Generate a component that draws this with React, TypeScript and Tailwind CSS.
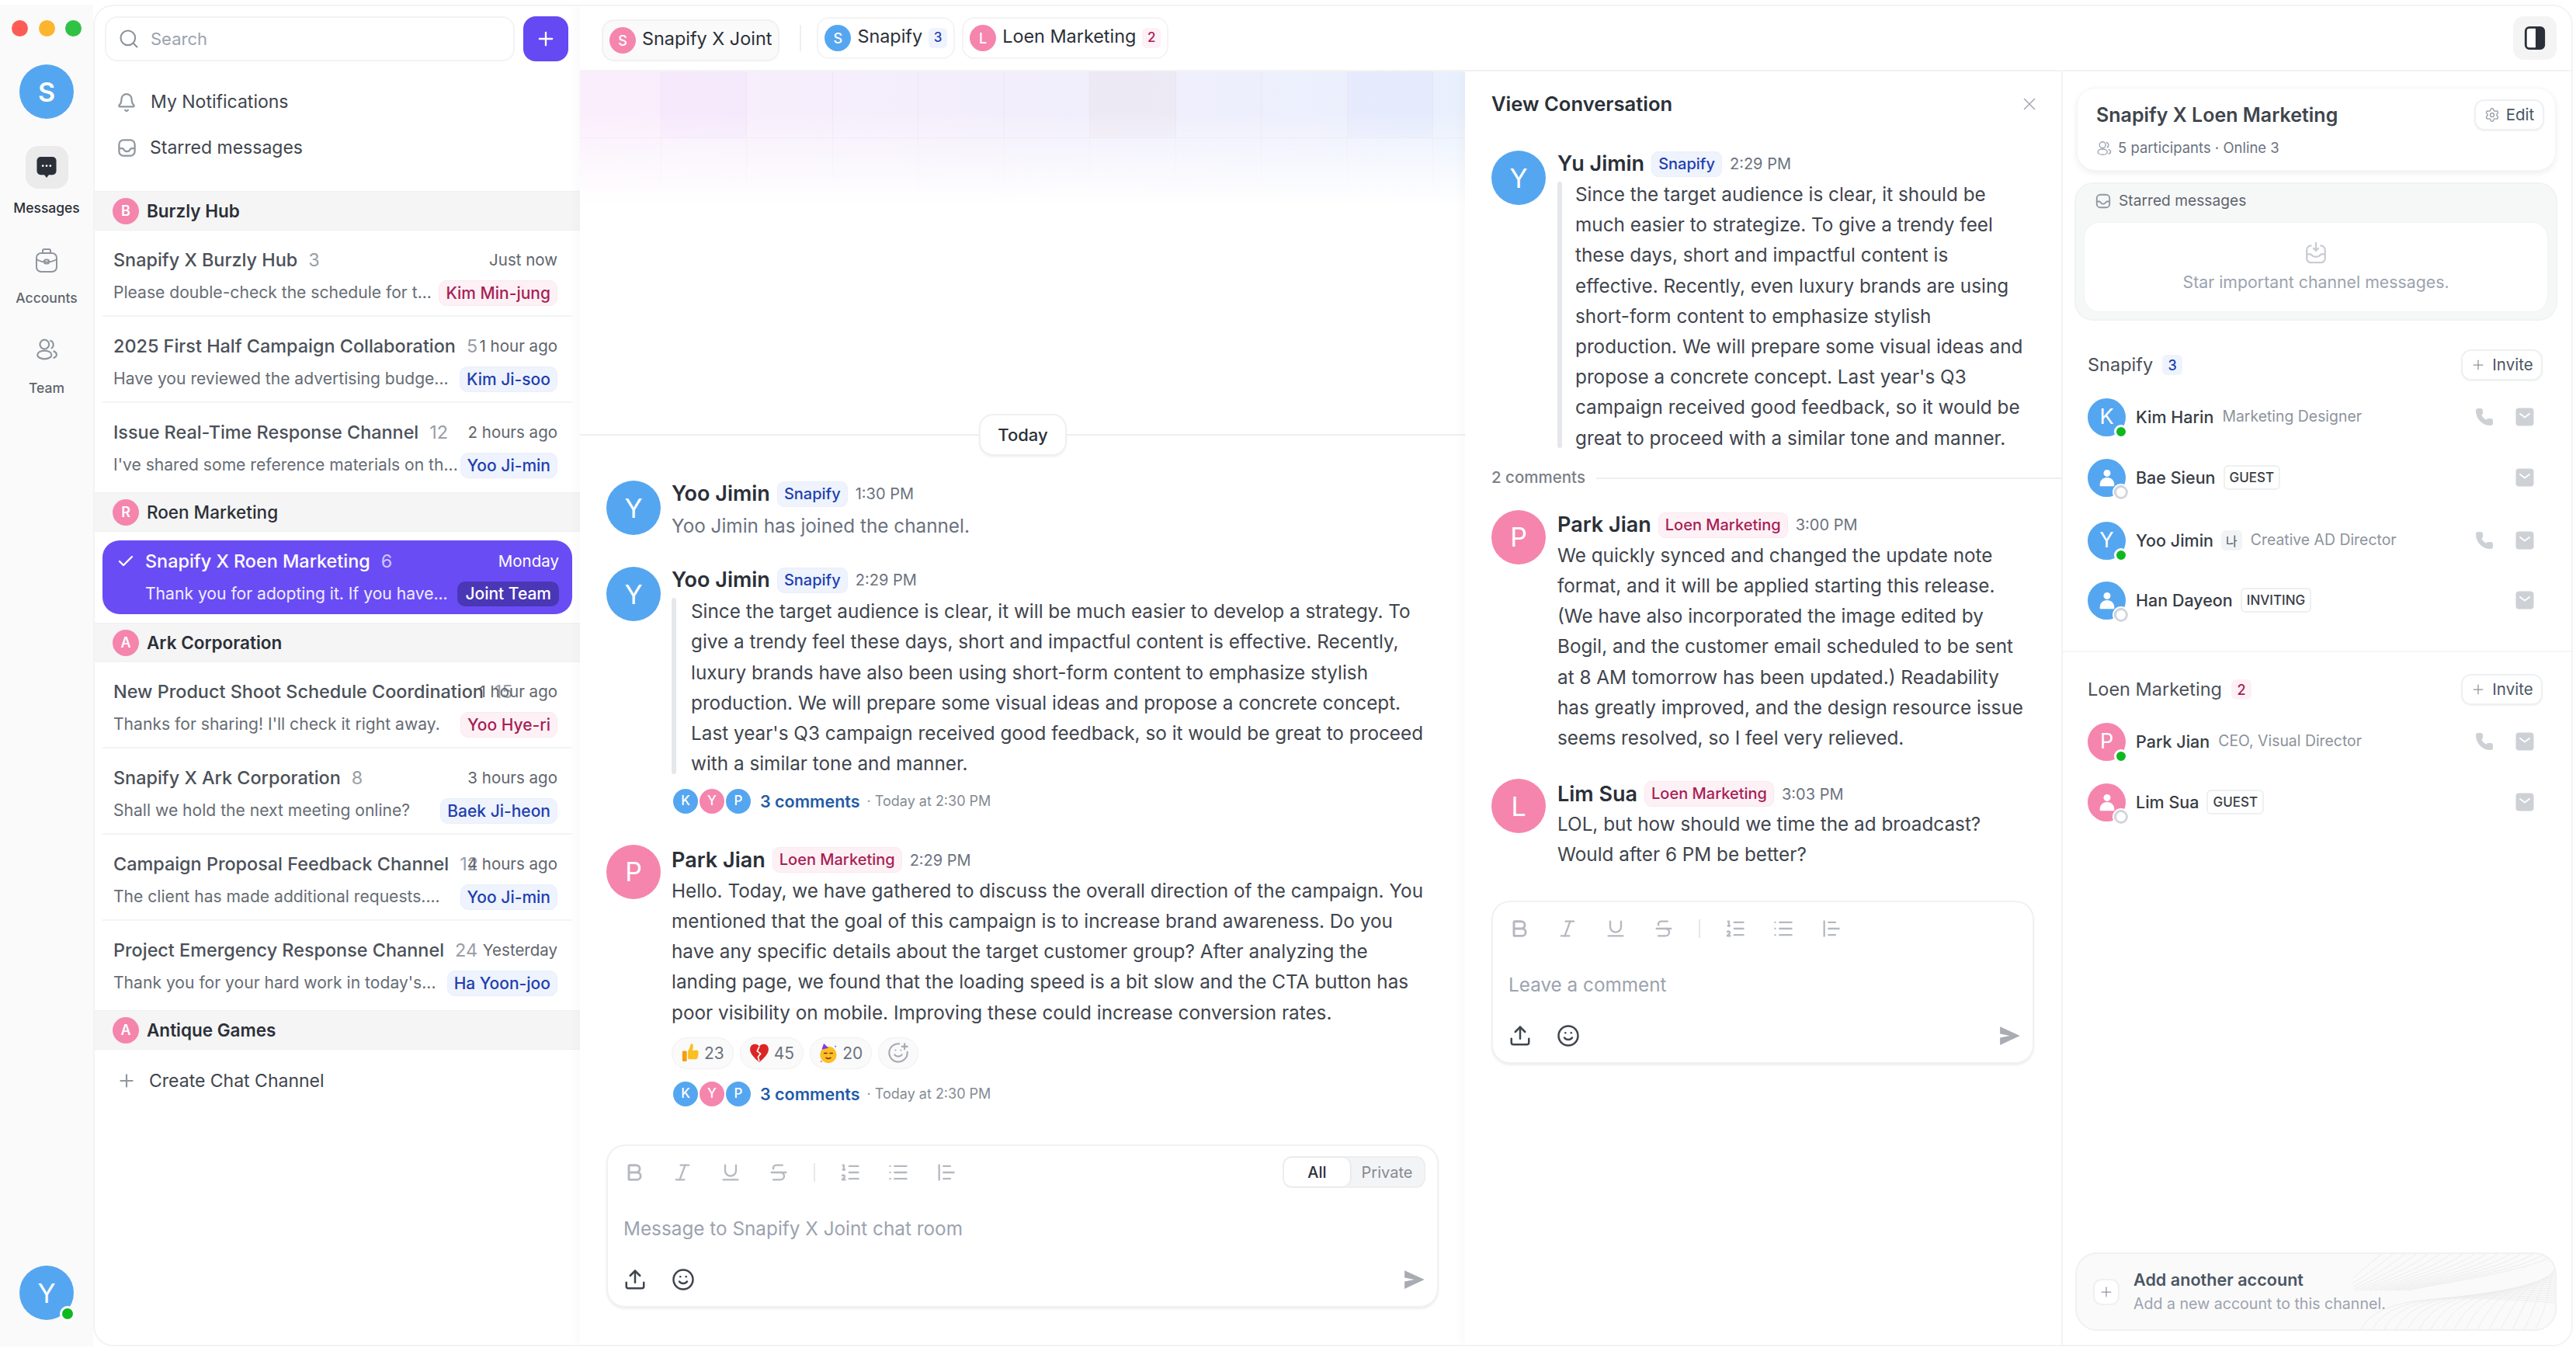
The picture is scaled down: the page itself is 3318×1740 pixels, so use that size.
import { Bell, Bold, Check, Italic, List, ListOrdered, Phone, Plus, Search, Settings, Smile, SmilePlus, Strikethrough, Underline, Upload, X } from "lucide-react";
import type { ReactNode } from "react";

type Tone = "blue" | "pink";

const avatarTone: Record<Tone, string> = {
  blue: "bg-[#55a6f0]",
  pink: "bg-[#f585ad]",
};

const badgeTone: Record<Tone, string> = {
  blue: "bg-[#eef3fd] text-[#1e40af] border-[#e9effb]",
  pink: "bg-[#fdf1f5] text-[#a81e55] border-[#fae9ef]",
};

function StarredIcon({ className }: { className: string }) {
  return (
    <svg viewBox="0 0 24 24" fill="none" stroke="currentColor" strokeWidth="2" className={className}>
      <rect x="3" y="3" width="18" height="18" rx="5" />
      <path d="M3 12.5h3.5c1 0 1.5.5 2 1.5s1.5 2 3.5 2 3-1 3.5-2 1-1.5 2-1.5H21" />
    </svg>
  );
}

function TeamIcon({ className }: { className: string }) {
  return (
    <svg viewBox="0 0 28 28" fill="none" stroke="currentColor" strokeWidth="2" className={className}>
      <circle cx="11.5" cy="8" r="5.5" />
      <ellipse cx="11.5" cy="20.5" rx="8.5" ry="5" />
      <path d="M18 3.2a5.2 5.2 0 0 1 1.5 9.6M22 16c2.500.8 4 2.200 4 4.200s-1.500 3.400-4 4.200" />
    </svg>
  );
}

function MailIcon() {
  return (
    <svg viewBox="0 0 24 24" className="size-[24px]">
      <rect x="0.5" y="0.500" width="23" height="23" rx="4" fill="#cdd1d5" />
      <path d="M6 8l6 4.500L18 8" fill="none" stroke="#fff" strokeWidth="2" strokeLinecap="round" />
    </svg>
  );
}

function PersonGlyph() {
  return (
    <svg viewBox="0 0 24 24" fill="#fff" className="size-[30px]">
      <circle cx="12" cy="7.500" r="3.600" />
      <path d="M4.500 20c0-5 3-8 7.500-8s7.500 3 7.500 8c0 .6-.4 1-1 1h-13c-.6 0-1-.4-1-1z" />
    </svg>
  );
}

function SendIcon({ className }: { className: string }) {
  return (
    <svg viewBox="0 0 24 24" fill="#a9adb3" className={className}>
      <path d="M2.500 2.500 23 12 2.500 21.500V14l10-2-10-2z" />
    </svg>
  );
}

function Thumb() {
  return (
    <svg viewBox="0 0 24 28" className="h-[27px] w-[24px]">
      <path d="M9 11c2-3 3-6 3.500-9 .2-1.300 3.500-1 3.500 2 0 2-.5 4-1 6h6c2 0 2.500 2 1.500 3 1 1 1 2.500-.2 3.300.8 1 .6 2.400-.5 3 .5 1.200-.3 2.700-1.800 2.700H11c-2 0-2-1-2-2z" fill="#fbbf24" />
      <rect x="1.500" y="11" width="6" height="14" rx="1.500" fill="#f59e0b" />
    </svg>
  );
}

function BrokenHeart() {
  return (
    <svg viewBox="0 0 24 24" className="size-[26px]">
      <path d="M12 23C5 17 1 12.500 1 7.500 1 4 3.500 1.500 6.800 1.500c2.200 0 4 1.100 5.200 3 1.200-1.900 3-3 5.200-3C20.500 1.500 23 4 23 7.500c0 5-4 9.500-11 15.500z" fill="#dc2626" />
      <path d="M12 4.500 9.500 10l4 3-3 4 1.500 5" fill="none" stroke="#fff" strokeWidth="1.500" />
    </svg>
  );
}

function PartyFace() {
  return (
    <svg viewBox="0 0 24 28" className="h-[27px] w-[24px]">
      <circle cx="12" cy="16" r="11" fill="#fbbf24" />
      <path d="M3 9 6 1l6 6z" fill="#7c3aed" />
      <path d="M6.500 14h3.500M14 14h3.500" stroke="#7c2d12" strokeWidth="1.600" strokeLinecap="round" />
      <path d="M9 20c2 1.500 4 1.500 6 0" fill="none" stroke="#7c2d12" strokeWidth="1.600" strokeLinecap="round" />
      <circle cx="2.500" cy="25" r="1" fill="#ef4444" />
      <circle cx="21.500" cy="5" r="1" fill="#3b82f6" />
    </svg>
  );
}

function SmallAvatar({ letter, tone }: { letter: string; tone: Tone }) {
  return (
    <div className={`-ml-[2px] flex size-[36px] items-center justify-center rounded-full border-[2px] border-white text-[17px] font-medium text-white first:ml-0 ${avatarTone[tone]}`}>
      {letter}
    </div>
  );
}

function GroupHeader({ letter, name, medium }: { letter: string; name: string; medium?: boolean }) {
  return (
    <div className="flex h-[51px] items-center border-y border-[#f1f1f1] bg-[#f5f5f5] pl-[23px]">
      <div className="flex size-[34px] items-center justify-center rounded-full bg-[#f585ad] text-[18px] font-semibold text-white">{letter}</div>
      <span className={`ml-[10px] text-[22.500px] text-[#2b3038] ${medium ? "font-medium" : "font-semibold"}`}>{name}</span>
    </div>
  );
}

function ChannelRow({ title, count, time, preview, who, tone, last }: { title: string; count: string; time: string; preview: string; who: string; tone: Tone; last?: boolean }) {
  return (
    <div className={`mx-[10px] pl-[14px] pr-[19px] pt-[20px] ${last ? "h-[115px]" : "h-[111px] border-b-2 border-[#f3f4f6]"}`}>
      <div className="flex h-[36px] items-center">
        <div className="w-0 grow whitespace-nowrap text-[23.400px] font-medium text-[#4b5159]">
          {title}
          <span className="ml-[14px] font-normal text-[#9a9ea5]">{count}</span>
        </div>
        <span className="shrink-0 whitespace-nowrap text-[20.500px] text-[#5f656d]">{time}</span>
      </div>
      <div className="mt-[7px] flex h-[34px] items-center justify-between">
        <span className="whitespace-nowrap text-[21.100px] text-[#666c74]">{preview}</span>
        <span className={`shrink-0 whitespace-nowrap rounded-[10px] border px-[8px] py-[1px] text-[21px] font-medium leading-[29px] ${badgeTone[tone]}`}>{who}</span>
      </div>
    </div>
  );
}

function NameLine({ name, team, tone, time, size }: { name: string; team: string; tone: Tone; time: string; size: string }) {
  return (
    <div className={`flex items-center ${size}`}>
      <span className="text-[27px] font-semibold text-[#2b3038]">{name}</span>
      <span className={`ml-[9px] rounded-[9px] border px-[8px] text-[20px] font-medium leading-[31px] ${badgeTone[tone]}`}>{team}</span>
      <span className="ml-[10px] text-[20px] text-[#6b7280]">{time}</span>
    </div>
  );
}

function Avatar({ letter, tone }: { letter: string; tone: Tone }) {
  return (
    <div className={`flex size-[70px] shrink-0 items-center justify-center rounded-full text-[34px] text-white ${avatarTone[tone]}`}>{letter}</div>
  );
}

function Comments() {
  return (
    <div className="flex h-[36px] items-center">
      <div className="flex">
        <SmallAvatar letter="K" tone="blue" />
        <SmallAvatar letter="Y" tone="pink" />
        <SmallAvatar letter="P" tone="blue" />
      </div>
      <span className="ml-[10px] text-[21.500px] font-semibold text-[#1f5ba8]">3 comments</span>
      <span className="ml-[9px] text-[18px] text-[#858b93]">· Today at 2:30 PM</span>
    </div>
  );
}

function Reaction({ children, label }: { children: ReactNode; label?: string }) {
  return (
    <div className="flex h-[41px] items-center justify-center gap-[6px] rounded-full border border-[#f0f0f0] bg-[#fafafa] px-[11px] text-[21px] text-[#6b7280]">
      {children}
      {label}
    </div>
  );
}

function Composer({ placeholder, size, toggle }: { placeholder: string; size: string; toggle?: boolean }) {
  const iconClass = "size-[28px] text-[#b5b9bf]";
  return (
    <div className={`flex flex-col rounded-[24px] border-2 border-[#f1f1f1] bg-white pl-[20px] pr-[15px] pt-[12px] shadow-[0_2px_3px_rgba(0,0,0,0.07)] ${size}`}>
      <div className="flex h-[44px] items-center">
        <div className="flex items-center gap-[34px]">
          <Bold className={iconClass} strokeWidth={2.500} />
          <Italic className={iconClass} strokeWidth={2} />
          <Underline className={iconClass} strokeWidth={2} />
          <Strikethrough className={iconClass} strokeWidth={2} />
        </div>
        <div className="ml-[31px] mr-[31px] h-[24px] w-[2px] bg-[#e8e8e8]" />
        <div className="flex items-center gap-[34px]">
          <ListOrdered className={iconClass} strokeWidth={2} />
          <List className={iconClass} strokeWidth={2} />
          <svg viewBox="0 0 24 24" fill="none" stroke="currentColor" strokeWidth="2" className={iconClass}>
            <path d="M4 3v18M8 5h9M8 12h13M8 19h9" />
          </svg>
        </div>
        {toggle ? (
          <div className="ml-auto flex h-[41px] w-[184px] rounded-[12px] border-2 border-[#eeeeee] bg-[#f3f4f5] text-[20px]">
            <div className="flex w-[85px] items-center justify-center rounded-[10px] bg-white font-medium text-[#2b3038] shadow-[1px_0_2px_rgba(0,0,0,0.08)]">All</div>
            <div className="flex flex-1 items-center justify-center text-[#858b93]">Private</div>
          </div>
        ) : null}
      </div>
      <div className="flex flex-1 items-center text-[24.300px] text-[#9ca3af]">{placeholder}</div>
      <div className="mb-[19px] flex items-center">
        <Upload className="size-[30px] text-[#3f454d]" strokeWidth={2} />
        <Smile className="ml-[32px] size-[30px] text-[#3f454d]" strokeWidth={2} />
        <SendIcon className="ml-auto size-[30px]" />
      </div>
    </div>
  );
}

function IconButton({ children, size }: { children: ReactNode; size: string }) {
  return (
    <div className={`flex items-center justify-center gap-[8px] rounded-[13px] border-2 border-[#eef0f1] bg-white text-[20.500px] text-[#4b5563] shadow-[0_1px_2px_rgba(0,0,0,0.06)] ${size}`}>
      {children}
    </div>
  );
}

function Member({ letter, tone, online, name, role, tag, phone, mine, top }: { letter?: string; tone: Tone; online: boolean; name: string; role?: string; tag?: string; phone?: boolean; mine?: boolean; top: string }) {
  return (
    <div className={`flex h-[48px] items-center pr-[11px] ${top}`}>
      <div className={`relative flex size-[49px] shrink-0 items-center justify-center rounded-full text-[27px] text-white ${avatarTone[tone]}`}>
        {letter ?? <PersonGlyph />}
        {online ? (
          <div className="absolute -bottom-[3px] -right-[3px] size-[18px] rounded-full border-[3px] border-white bg-[#0fb820]" />
        ) : (
          <div className="absolute -bottom-[3px] -right-[3px] size-[18px] rounded-full border-[3px] border-[#d1d5db] bg-white outline-[2px] outline-white" />
        )}
      </div>
      <span className="ml-[13px] text-[21.500px] font-medium text-[#373d45]">{name}</span>
      {mine ? <span className="ml-[10px] rounded-[6px] bg-[#f1f3f4] px-[6px] font-['Noto_Sans_CJK_KR',sans-serif] text-[16px] leading-[26px] text-[#4b5563]">나</span> : null}
      {tag ? <span className="ml-[10px] rounded-[6px] border-2 border-[#eef0f1] px-[6px] text-[17px] font-medium leading-[28px] text-[#373d45]">{tag}</span> : null}
      {role ? <span className="ml-[11px] text-[19.400px] text-[#8d939b]">{role}</span> : null}
      <div className="ml-auto flex items-center">
        {phone ? <Phone className="mr-[28px] size-[24px] fill-[#cdd1d5] text-[#cdd1d5]" /> : null}
        <MailIcon />
      </div>
    </div>
  );
}

function SectionTitle({ title, count, tone }: { title: string; count: string; tone: Tone }) {
  return (
    <div className="flex h-[40px] items-center justify-between">
      <div className="flex items-center gap-[12px]">
        <span className="text-[23.500px] text-[#4b5159]">{title}</span>
        <span className={`flex size-[26px] items-center justify-center rounded-[6px] text-[18px] font-medium ${badgeTone[tone]}`}>{count}</span>
      </div>
      <IconButton size="h-[40px] w-[105px]">
        <Plus className="size-[20px] text-[#8d939b]" strokeWidth={1.500} />
        Invite
      </IconButton>
    </div>
  );
}

function HeaderChip({ letter, label, tone, count, countTone, active }: { letter: string; label: string; tone: Tone; count?: string; countTone?: Tone; active?: boolean }) {
  return (
    <div className={`flex h-[54px] items-center gap-[8px] rounded-[16px] border-2 px-[8px] text-[23.400px] text-[#2b3038] ${active ? "mt-[6px] border-[#f1f1f1] bg-[#fafafa]" : "border-[#f4f4f4] bg-white"}`}>
      <div className={`flex size-[34px] items-center justify-center rounded-full text-[18px] font-medium text-white ${avatarTone[tone]}`}>{letter}</div>
      <span className="pb-[4px]">{label}</span>
      {count && countTone ? <span className={`flex h-[26px] w-[24px] items-center justify-center rounded-[6px] text-[17px] font-medium ${badgeTone[countTone]}`}>{count}</span> : null}
    </div>
  );
}

const tints = ["", "bg-[#a855f7]/3", "", "", "", "", "bg-[#a16207]/3", "", "", "bg-[#6366f1]/3", ""];

function Banner() {
  return (
    <div className="absolute inset-x-0 top-0 h-[172px] overflow-hidden bg-gradient-to-r from-[#fbeefc] via-[#f2eefc] to-[#e9f0fd]">
      <div className="-ml-[6px] grid grid-cols-[repeat(11,110.500px)] grid-rows-[86px_86px]">
        {[...tints, ...tints.map(() => "")].map((tint, i) => (
          <div key={i} className={`border-r border-b border-[#e7e0ee]/60 ${tint}`} />
        ))}
      </div>
      <div className="absolute inset-0 bg-gradient-to-b from-transparent from-30% to-white" />
    </div>
  );
}

function ContourLines() {
  const lines = Array.from({ length: 16 }, (_, i) => i);
  return (
    <svg viewBox="0 0 260 100" fill="none" stroke="#ececec" strokeWidth="1" className="absolute bottom-0 right-0 h-[100px] w-[260px]">
      {lines.map((i) => (
        <path key={i} d={`M${10 + i * 15} 100C${30 + i * 15} 62 ${100 + i * 10} ${52 - i} 260 ${66 - i * 3}`} />
      ))}
      {lines.map((i) => (
        <path key={`t${i}`} d={`M${40 + i * 15} 0C${14 + i * 15} 22 ${i * 10} 34 ${i * 6 - 20} 50`} />
      ))}
    </svg>
  );
}

export default function App() {
  return (
    <div className="flex h-[1740px] w-[3318px] overflow-hidden bg-white pb-[6px] pr-[4px] pt-[6px] font-['Inter',sans-serif]">
      <nav className="flex w-[120px] shrink-0 flex-col items-center bg-[#fafafa]">
        <div className="mt-[20px] flex gap-[13.500px]">
          <div className="size-[21px] rounded-full bg-[#fd5c56]" />
          <div className="size-[21px] rounded-full bg-[#fdb52d]" />
          <div className="size-[21px] rounded-full bg-[#30c244]" />
        </div>
        <div className="mt-[36px] flex size-[70px] items-center justify-center rounded-full bg-[#55a6f0] text-[34px] font-semibold text-white">S</div>
        <div className="mt-[35px] flex size-[55px] items-center justify-center rounded-[16px] bg-[#ebebeb]">
          <svg viewBox="0 0 26 28" className="h-[27px] w-[26px]">
            <path d="M5 0h16a5 5 0 0 1 5 5v14a5 5 0 0 1-5 5h-5l-3 4-3-4H5a5 5 0 0 1-5-5V5a5 5 0 0 1 5-5z" fill="#2b3038" />
            <circle cx="8" cy="12" r="1.400" fill="#fff" />
            <circle cx="13" cy="12" r="1.400" fill="#fff" />
            <circle cx="18" cy="12" r="1.400" fill="#fff" />
          </svg>
        </div>
        <span className="mt-[12px] text-[17.500px] font-medium leading-[26px] text-[#2b3038]">Messages</span>
        <svg viewBox="0 0 28 32" fill="none" stroke="#8f959d" strokeWidth="2" className="mt-[38px] h-[32px] w-[28px]">
          <rect x="1" y="7" width="26" height="24" rx="6" />
          <path d="M9 7V4a2 2 0 0 1 2-2h6a2 2 0 0 1 2 2v3M1 15c4 2.500 8 3.500 13 3.500S23 17.500 27 15" />
          <rect x="11" y="15.500" width="6" height="5" rx="2" />
        </svg>
        <span className="mt-[20px] text-[17.500px] font-medium leading-[26px] text-[#5f656d]">Accounts</span>
        <TeamIcon className="mt-[38px] size-[30px] text-[#8f959d]" />
        <span className="mt-[22px] text-[17.500px] font-medium leading-[26px] text-[#5f656d]">Team</span>
        <div className="relative mb-[34px] mt-auto flex size-[70px] items-center justify-center rounded-full bg-[#55a6f0] text-[34px] text-white">
          Y
          <div className="absolute bottom-[-2px] right-[-2px] size-[20px] rounded-full border-[3px] border-white bg-[#0fb820]" />
        </div>
      </nav>

      <div className="flex min-w-0 flex-1 overflow-hidden rounded-[26px] border-2 border-[#f3f3f3] bg-white">
        <aside className="w-[625px] shrink-0">
          <div className="flex items-center gap-[11px] pl-[13px] pt-[13px]">
            <div className="flex h-[58px] w-[528px] items-center rounded-[16px] border-2 border-[#f3f3f3] pl-[15px] text-[22px] text-[#9ca3af]">
              <Search className="size-[28px] text-[#8d939b]" strokeWidth={1.800} />
              <span className="ml-[14px]">Search</span>
            </div>
            <div className="flex size-[58px] items-center justify-center rounded-[16px] bg-[#6549f2]">
              <Plus className="size-[28px] text-white" strokeWidth={2} />
            </div>
          </div>
          <div className="mt-[23px] flex h-[59px] items-center pl-[28px] text-[23px] text-[#3f454d]">
            <Bell className="size-[26px] text-[#9097a0]" strokeWidth={2} />
            <span className="ml-[18px]">My Notifications</span>
          </div>
          <div className="flex h-[59px] items-center pl-[28px] text-[23px] text-[#3f454d]">
            <StarredIcon className="size-[27px] text-[#9097a0]" />
            <span className="ml-[16px]">Starred messages</span>
          </div>
          <div className="mt-[26px]">
            <GroupHeader letter="B" name="Burzly Hub" />
            <ChannelRow title="Snapify X Burzly Hub" count="3" time="Just now" preview="Please double-check the schedule for t..." who="Kim Min-jung" tone="pink" />
            <ChannelRow title="2025 First Half Campaign Collaboration" count="5" time="1 hour ago" preview="Have you reviewed the advertising budge..." who="Kim Ji-soo" tone="blue" />
            <ChannelRow title="Issue Real-Time Response Channel" count="12" time="2 hours ago" preview="I've shared some reference materials on th..." who="Yoo Ji-min" tone="blue" last />
            <GroupHeader letter="R" name="Roen Marketing" medium />
            <div className="mx-[10px] my-[11px] flex h-[95px] rounded-[22px] bg-[#6a4cf5] pr-[17px] text-white">
              <Check className="ml-[18px] mt-[15px] size-[24px] shrink-0" strokeWidth={2.400} />
              <div className="ml-[13px] min-w-0 flex-1 pt-[8px]">
                <div className="flex h-[38px] items-center justify-between">
                  <div className="whitespace-nowrap text-[23.400px] font-medium">
                    Snapify X Roen Marketing
                    <span className="ml-[14px] font-normal text-[#cfc5fb]">6</span>
                  </div>
                  <span className="text-[20.500px]">Monday</span>
                </div>
                <div className="mt-[6px] flex h-[34px] items-center justify-between">
                  <span className="whitespace-nowrap text-[21.100px] text-[#f1eeff]">Thank you for adopting it. If you have...</span>
                  <span className="shrink-0 whitespace-nowrap rounded-[10px] bg-[#4a37b5] px-[10px] text-[21px] font-medium leading-[32px]">Joint Team</span>
                </div>
              </div>
            </div>
            <GroupHeader letter="A" name="Ark Corporation" />
            <ChannelRow title="New Product Shoot Schedule Coordination" count="15" time="1 hour ago" preview="Thanks for sharing! I'll check it right away." who="Yoo Hye-ri" tone="pink" />
            <ChannelRow title="Snapify X Ark Corporation" count="8" time="3 hours ago" preview="Shall we hold the next meeting online?" who="Baek Ji-heon" tone="blue" />
            <ChannelRow title="Campaign Proposal Feedback Channel" count="12" time="4 hours ago" preview="The client has made additional requests...." who="Yoo Ji-min" tone="blue" />
            <ChannelRow title="Project Emergency Response Channel" count="24" time="Yesterday" preview="Thank you for your hard work in today's..." who="Ha Yoon-joo" tone="blue" last />
            <GroupHeader letter="A" name="Antique Games" />
            <div className="mt-[20px] flex h-[40px] items-center pl-[28px] text-[23px] text-[#3f454d]">
              <Plus className="size-[26px] text-[#9097a0]" strokeWidth={2} />
              <span className="ml-[16px]">Create Chat Channel</span>
            </div>
          </div>
        </aside>

        <div className="relative z-10 flex min-w-0 flex-1 flex-col shadow-[-6px_0_12px_rgba(0,0,0,0.025)]">
          <header className="flex h-[84px] shrink-0 items-center border-b-2 border-[#f3f3f3] bg-white pl-[28px] pr-[19px]">
            <HeaderChip letter="S" label="Snapify X Joint" tone="pink" active />
            <div className="ml-[26px] mr-[20px] h-[34px] w-[2px] bg-[#efefef]" />
            <HeaderChip letter="S" label="Snapify" tone="blue" count="3" countTone="blue" />
            <div className="w-[9px]" />
            <HeaderChip letter="L" label="Loen Marketing" tone="pink" count="2" countTone="pink" />
            <div className="ml-auto flex size-[56px] items-center justify-center rounded-[14px] bg-[#f4f4f4]">
              <svg viewBox="0 0 28 32" className="h-[30px] w-[28px]">
                <rect x="1.500" y="1.500" width="25" height="29" rx="5" fill="#fff" stroke="#2b3038" strokeWidth="3" />
                <path d="M15 1.500h6.500a5 5 0 0 1 5 5v19a5 5 0 0 1-5 5H15z" fill="#2b3038" />
              </svg>
            </div>
          </header>

          <div className="flex min-h-0 flex-1">
            <main className="relative w-[1140px] shrink-0">
              <Banner />
              <div className="relative pt-[441px]">
                <div className="flex items-center">
                  <div className="h-[2px] w-[514px] bg-[#efefef]" />
                  <div className="flex h-[54px] w-[113px] items-center justify-center rounded-[18px] border-2 border-[#f0f0f0] bg-white text-[22px] font-medium text-[#2b3038] shadow-[0_2px_3px_rgba(0,0,0,0.05)]">Today</div>
                  <div className="h-[2px] flex-1 bg-[#efefef]" />
                </div>
                <div className="pl-[34px] pt-[32px]">
                  <div className="flex gap-[14px]">
                    <Avatar letter="Y" tone="blue" />
                    <div>
                      <NameLine name="Yoo Jimin" team="Snapify" tone="blue" time="1:30 PM" size="h-[34px]" />
                      <p className="mt-[5px] text-[24.300px] leading-[39px] text-[#6b7280]">Yoo Jimin has joined the channel.</p>
                    </div>
                  </div>
                  <div className="mt-[33px] flex gap-[14px]">
                    <Avatar letter="Y" tone="blue" />
                    <div className="min-w-0 flex-1">
                      <NameLine name="Yoo Jimin" team="Snapify" tone="blue" time="2:29 PM" size="h-[34px]" />
                      <div className="mt-[4px] flex gap-[19px]">
                        <div className="mt-[2px] h-[227px] w-[6px] shrink-0 rounded-full bg-[#e5e7eb]" />
                        <p className="w-[950px] text-[24.300px] leading-[39.300px] text-[#3f454d]">
                          Since the target audience is clear, it will be much easier to develop a strategy. To give a trendy feel these days, short and impactful content is effective. Recently, luxury brands have also been using short-form content to emphasize stylish production. We will prepare some visual ideas and propose a concrete concept. Last year's Q3 campaign received good feedback, so it would be great to proceed with a similar tone and manner.
                        </p>
                      </div>
                      <div className="mt-[10px]">
                        <Comments />
                      </div>
                    </div>
                  </div>
                  <div className="mt-[38px] flex gap-[14px]">
                    <Avatar letter="P" tone="pink" />
                    <div className="min-w-0 flex-1">
                      <NameLine name="Park Jian" team="Loen Marketing" tone="pink" time="2:29 PM" size="h-[40px]" />
                      <p className="w-[980px] text-[24.300px] leading-[39.200px] text-[#3f454d]">
                        Hello. Today, we have gathered to discuss the overall direction of the campaign. You mentioned that the goal of this campaign is to increase brand awareness. Do you have any specific details about the target customer group? After analyzing the landing page, we found that the loading speed is a bit slow and the CTA button has poor visibility on mobile. Improving these could increase conversion rates.
                      </p>
                      <div className="mt-[12px] flex gap-[8px]">
                        <Reaction label="23"><Thumb /></Reaction>
                        <Reaction label="45"><BrokenHeart /></Reaction>
                        <Reaction label="20"><PartyFace /></Reaction>
                        <Reaction><SmilePlus className="size-[28px] text-[#a5aab1]" strokeWidth={1.800} /></Reaction>
                      </div>
                      <div className="mt-[14px]">
                        <Comments />
                      </div>
                    </div>
                  </div>
                  <div className="mt-[47px]">
                    <Composer placeholder="Message to Snapify X Joint chat room" size="h-[210px] w-[1072px]" toggle />
                  </div>
                </div>
              </div>
            </main>

            <section className="relative z-10 w-[768px] shrink-0 bg-white px-[34px] pt-[22px] shadow-[-6px_0_12px_rgba(0,0,0,0.025)]">
              <div className="flex h-[40px] items-center justify-between">
                <h2 className="text-[25.600px] font-semibold text-[#2b3038]">View Conversation</h2>
                <X className="mr-[-6px] size-[26px] text-[#a5aab1]" strokeWidth={1.500} />
              </div>
              <div className="mt-[40px] flex gap-[15px]">
                <Avatar letter="Y" tone="blue" />
                <div className="min-w-0 flex-1">
                  <NameLine name="Yu Jimin" team="Snapify" tone="blue" time="2:29 PM" size="h-[34px]" />
                  <div className="mt-[6px] flex gap-[17px]">
                    <div className="h-[343px] w-[6px] shrink-0 rounded-full bg-[#e5e7eb]" />
                    <p className="-mt-[3px] w-[588px] text-[24.300px] leading-[39.200px] text-[#3f454d]">
                      Since the target audience is clear, it should be much easier to strategize. To give a trendy feel these days, short and impactful content is effective. Recently, even luxury brands are using short-form content to emphasize stylish production. We will prepare some visual ideas and propose a concrete concept. Last year's Q3 campaign received good feedback, so it would be great to proceed with a similar tone and manner.
                    </p>
                  </div>
                </div>
              </div>
              <div className="-mr-[34px] mt-[17px] flex h-[30px] items-center">
                <span className="text-[20.500px] font-medium text-[#7b8189]">2 comments</span>
                <div className="ml-[14px] h-[2px] flex-1 bg-[#efefef]" />
              </div>
              <div className="mt-[26px] flex gap-[15px]">
                <Avatar letter="P" tone="pink" />
                <div className="min-w-0 flex-1">
                  <NameLine name="Park Jian" team="Loen Marketing" tone="pink" time="3:00 PM" size="h-[39px]" />
                  <p className="w-[606px] text-[24.300px] leading-[39.200px] text-[#3f454d]">
                    We quickly synced and changed the update note format, and it will be applied starting this release. (We have also incorporated the image edited by Bogil, and the customer email scheduled to be sent at 8 AM tomorrow has been updated.) Readability has greatly improved, and the design resource issue seems resolved, so I feel very relieved.
                  </p>
                </div>
              </div>
              <div className="mt-[33px] flex gap-[15px]">
                <Avatar letter="L" tone="pink" />
                <div className="min-w-0 flex-1">
                  <NameLine name="Lim Sua" team="Loen Marketing" tone="pink" time="3:03 PM" size="h-[39px]" />
                  <p className="w-[606px] text-[24.300px] leading-[39.200px] text-[#3f454d]">
                    LOL, but how should we time the ad broadcast? Would after 6 PM be better?
                  </p>
                </div>
              </div>
              <div className="mt-[39px]">
                <Composer placeholder="Leave a comment" size="h-[210px] w-[699px]" />
              </div>
            </section>

            <section className="relative z-20 flex min-w-0 flex-1 flex-col border-l-2 border-[#f3f3f3] bg-white pb-[18px] pt-[21px]">
              <div className="ml-[18px] mr-[20px] flex h-[107px] justify-between rounded-[24px] border border-[#f5f5f5] bg-white pl-[24px] pr-[14px] pt-[14px] shadow-[0_3px_8px_rgba(0,0,0,0.07)]">
                <div>
                  <h3 className="text-[25px] font-semibold leading-[40px] text-[#3f454d]">Snapify X Loen Marketing</h3>
                  <div className="mt-[9px] flex items-center gap-[8px] text-[18.500px] text-[#6b7280]">
                    <TeamIcon className="size-[20px] text-[#9ca3af]" />
                    5 participants · Online 3
                  </div>
                </div>
                <IconButton size="h-[40px] w-[90px]">
                  <Settings className="size-[20px] text-[#8d939b]" strokeWidth={1.500} />
                  Edit
                </IconButton>
              </div>
              <div className="ml-[15px] mr-[18px] mt-[15px] h-[178px] rounded-[24px] border-2 border-[#f1f3f3] bg-[#f6f8f8] px-[10px]">
                <div className="flex h-[49px] items-center pb-[6px] pl-[14px] text-[19.200px] text-[#5f656d]">
                  <StarredIcon className="size-[22px] text-[#9097a0]" />
                  <span className="ml-[9px]">Starred messages</span>
                </div>
                <div className="flex h-[116px] flex-col items-center rounded-[20px] border border-[#f1f3f3] bg-white pt-[24px]">
                  <svg viewBox="0 0 30 32" fill="none" stroke="#c9cdd2" strokeWidth="2.500" className="h-[29px] w-[28px]">
                    <path d="M9 6H8a6 6 0 0 0-6 6v12a6 6 0 0 0 6 6h14a6 6 0 0 0 6-6V12a6 6 0 0 0-6-6h-1" />
                    <path d="M2 18h5c2 0 2 4 8 4s6-4 8-4h5M15 1v11M11 9l4 4 4-4" />
                  </svg>
                  <span className="mt-[8px] text-[21.300px] text-[#9ca3af]">Star important channel messages.</span>
                </div>
              </div>
              <div className="pl-[32px] pr-[37px] pt-[37px]">
                <SectionTitle title="Snapify" count="3" tone="blue" />
                <Member letter="K" tone="blue" online name="Kim Harin" role="Marketing Designer" phone top="mt-[23px]" />
                <Member tone="blue" online={false} name="Bae Sieun" tag="GUEST" top="mt-[30px]" />
                <Member letter="Y" tone="blue" online name="Yoo Jimin" mine role="Creative AD Director" phone top="mt-[33px]" />
                <Member tone="blue" online={false} name="Han Dayeon" tag="INVITING" top="mt-[29px]" />
              </div>
              <div className="mt-[41px] h-[2px] bg-[#f6f6f6]" />
              <div className="pl-[32px] pr-[37px] pt-[28px]">
                <SectionTitle title="Loen Marketing" count="2" tone="pink" />
                <Member letter="P" tone="pink" online name="Park Jian" role="CEO, Visual Director" phone top="mt-[23px]" />
                <Member tone="pink" online={false} name="Lim Sua" tag="GUEST" top="mt-[30px]" />
              </div>
              <div className="relative ml-[16px] mr-[19px] mt-auto flex h-[101px] items-center overflow-hidden rounded-[28px] border-2 border-[#f1f1f1] bg-[#fafafa] pl-[21px]">
                <ContourLines />
                <div className="flex size-[34px] items-center justify-center rounded-[11px] border-2 border-[#f0f0f0] bg-white">
                  <Plus className="size-[20px] text-[#9097a0]" strokeWidth={1.500} />
                </div>
                <div className="relative ml-[18px]">
                  <div className="text-[21.600px] font-semibold leading-[31px] text-[#4b5563]">Add another account</div>
                  <div className="text-[19.600px] leading-[31px] text-[#9ca3af]">Add a new account to this channel.</div>
                </div>
              </div>
            </section>
          </div>
        </div>
      </div>
    </div>
  );
}
